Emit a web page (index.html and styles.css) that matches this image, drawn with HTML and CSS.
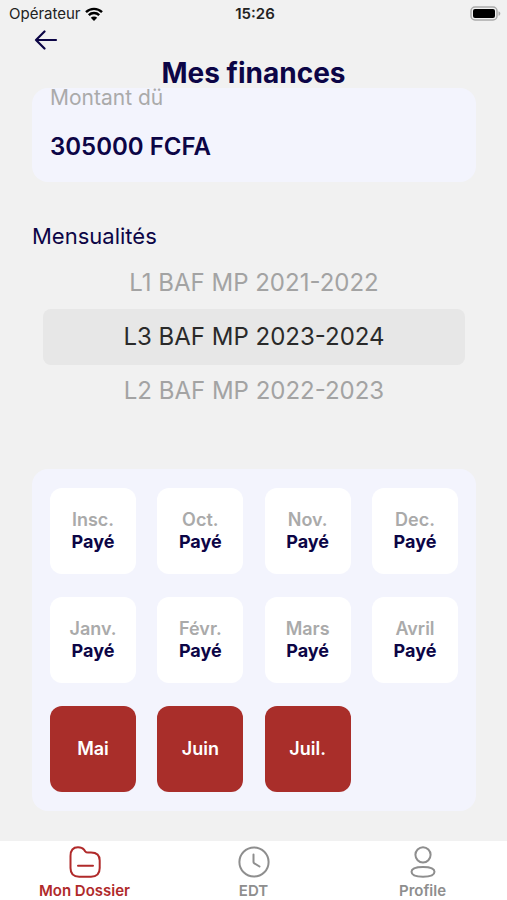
FILE: index.html
```html
<!DOCTYPE html>
<html lang="fr">
<head>
  <meta charset="utf-8">
  <meta name="viewport" content="width=device-width, initial-scale=1">
  <title>Mes finances</title>
  <link rel="stylesheet" href="styles.css">
</head>
<body>
  <div class="status-bar">
    <div class="carrier">
      <span>Opérateur</span>
      <svg width="18" height="14" viewBox="0 0 18 14" aria-hidden="true">
        <path d="M1 5.2a11.4 11.4 0 0 1 16 0M3.8 8.2a7.4 7.4 0 0 1 10.4 0" fill="none" stroke="#000" stroke-width="2.4"/>
        <path d="M9 14 5.8 10.7a4.6 4.6 0 0 1 6.4 0z" fill="#000"/>
      </svg>
    </div>
    <time class="clock">15:26</time>
    <svg class="battery" width="31" height="15" viewBox="0 0 31 15" aria-hidden="true">
      <rect x="1" y="1" width="26" height="13" rx="4" fill="#f1f1f1" stroke="#aaa" stroke-width="1.5"/>
      <rect x="3" y="3" width="22" height="9" rx="2" fill="#000"/>
      <path d="M28.5 5.2c2.4.8 2.4 3.8 0 4.6z" fill="#aaa"/>
    </svg>
  </div>

  <header class="header">
    <button class="back" type="button" aria-label="Retour">
      <svg width="24" height="20" viewBox="0 0 24 20" aria-hidden="true">
        <path d="M22 10H2M10.500 1.500 2 10l8.500 8.500" fill="none" stroke="#0c0546" stroke-width="2.200" stroke-linecap="round" stroke-linejoin="round"/>
      </svg>
    </button>
    <h1 class="title">Mes finances</h1>
  </header>

  <main class="content">
    <section class="card amount">
      <p class="amount-label">Montant dü</p>
      <p class="amount-value">305000 FCFA</p>
    </section>

    <h2 class="section-title" id="monthly">Mensualités</h2>

    <div class="picker" role="radiogroup" aria-labelledby="monthly">
      <label class="option"><input type="radio" name="year">L1 BAF MP 2021-2022</label>
      <label class="option"><input type="radio" name="year" checked>L3 BAF MP 2023-2024</label>
      <label class="option"><input type="radio" name="year">L2 BAF MP 2022-2023</label>
    </div>

    <ul class="card months">
      <li class="month"><span>Insc.</span><strong>Payé</strong></li>
      <li class="month"><span>Oct.</span><strong>Payé</strong></li>
      <li class="month"><span>Nov.</span><strong>Payé</strong></li>
      <li class="month"><span>Dec.</span><strong>Payé</strong></li>
      <li class="month"><span>Janv.</span><strong>Payé</strong></li>
      <li class="month"><span>Févr.</span><strong>Payé</strong></li>
      <li class="month"><span>Mars</span><strong>Payé</strong></li>
      <li class="month"><span>Avril</span><strong>Payé</strong></li>
      <li class="month due"><span>Mai</span></li>
      <li class="month due"><span>Juin</span></li>
      <li class="month due"><span>Juil.</span></li>
    </ul>
  </main>

  <nav class="tabs">
    <a class="tab active" href="#dossier" aria-current="page">
      <svg width="32" height="32" viewBox="0 0 32 32" aria-hidden="true">
        <path d="M1.500 10C1.500 4 4 1.200 9 1.200c3.500 0 4.500.500 6 2.400l1.200 1.700c.8 1 1.500 1.300 2.800 1.300h3c5.800 0 8.700 2.500 8.700 8v7.400c0 6-2.800 8.700-8.700 8.700H10.200c-6 0-8.700-2.700-8.700-8.700zM9 19.700h15"/>
      </svg>
      <span>Mon Dossier</span>
    </a>
    <a class="tab" href="#edt">
      <svg width="32" height="32" viewBox="0 0 32 32" aria-hidden="true">
        <circle cx="16" cy="16" r="14.600"/>
        <path d="M15.500 8.500V16c0 .6.300 1 .8 1.300l5.200 3.200"/>
      </svg>
      <span>EDT</span>
    </a>
    <a class="tab" href="#profile">
      <svg width="32" height="32" viewBox="0 0 32 32" aria-hidden="true">
        <circle cx="16" cy="8.800" r="7.600"/>
        <path d="M4.500 25.800c0-3.600 3.500-4.800 11.500-4.800s11.500 1.200 11.500 4.800-3.500 4.900-11.500 4.900-11.500-1.300-11.500-4.900z"/>
      </svg>
      <span>Profile</span>
    </a>
  </nav>
</body>
</html>
```

FILE: styles.css
```css
* {
  box-sizing: border-box;
}

body {
  display: flex;
  flex-direction: column;
  min-height: 100vh;
  margin: 0;
  background: #f1f1f1;
  color: #0c0546;
  font-family: Inter, "Liberation Sans", sans-serif;
}

h1, h2, p, ul {
  margin: 0;
  padding: 0;
}

.status-bar {
  display: grid;
  grid-template-columns: 1fr auto 1fr;
  align-items: center;
  height: 27px;
  padding: 0 6px 0 9px;
  color: #222;
  font-size: 15px;
}

.carrier {
  display: flex;
  align-items: center;
  gap: 4px;
}

.clock {
  font-weight: 600;
}

.battery {
  justify-self: end;
}

.header {
  display: flex;
  flex-direction: column;
  padding-top: 1px;
}

.back {
  align-self: flex-start;
  height: 24px;
  margin-left: 34px;
  padding: 2px 0;
  border: 0;
  background: none;
}

.back svg {
  display: block;
}

.title {
  font-size: 28px;
  font-weight: 700;
  line-height: 42px;
  text-align: center;
}

.content {
  flex: 1;
  margin-top: -6px;
  padding: 0 31px 28px 32px;
}

.card {
  border-radius: 16px;
  background: #f3f4fd;
}

.amount {
  padding: 0 18px 20px;
}

.amount-label {
  color: #aaa;
  font-size: 21px;
  line-height: 20px;
}

.amount-value {
  padding-top: 24px;
  font-size: 24px;
  font-weight: 600;
  line-height: 30px;
}

.section-title {
  margin-top: 40px;
  font-size: 22px;
  font-weight: 400;
  line-height: 28px;
}

.picker {
  display: flex;
  flex-direction: column;
  margin: 7px 11px 52px;
}

.option {
  border-radius: 8px;
  color: #a3a3a3;
  font-size: 24px;
  line-height: 52px;
  text-align: center;
}

.option input {
  position: absolute;
  opacity: 0;
}

.option:has(input:checked) {
  background: #e7e7e7;
  color: #2a2a2a;
  line-height: 56px;
}

.months {
  display: grid;
  grid-template-columns: repeat(4, 86px);
  justify-content: space-between;
  row-gap: 23px;
  padding: 19px 18px;
  list-style: none;
}

.month {
  display: flex;
  flex-direction: column;
  align-items: center;
  justify-content: center;
  height: 86px;
  border-radius: 12px;
  background: #fff;
  color: #aaa;
  font-size: 18px;
  font-weight: 600;
  line-height: 22px;
}

.month strong {
  color: #0c0546;
  font-weight: 700;
}

.due {
  background: #a92e2a;
  color: #fff;
}

.tabs {
  display: grid;
  grid-template-columns: repeat(3, 1fr);
  height: 59px;
  background: #fff;
}

.tab {
  display: flex;
  flex-direction: column;
  align-items: center;
  gap: 4px;
  padding-top: 5px;
  color: #8e8e8e;
  font-size: 15px;
  font-weight: 600;
  line-height: 18px;
  text-decoration: none;
}

.tab svg {
  fill: none;
  stroke: currentColor;
  stroke-width: 2;
  stroke-linecap: round;
  stroke-linejoin: round;
}

.tab.active {
  color: #b02a2a;
}
```
